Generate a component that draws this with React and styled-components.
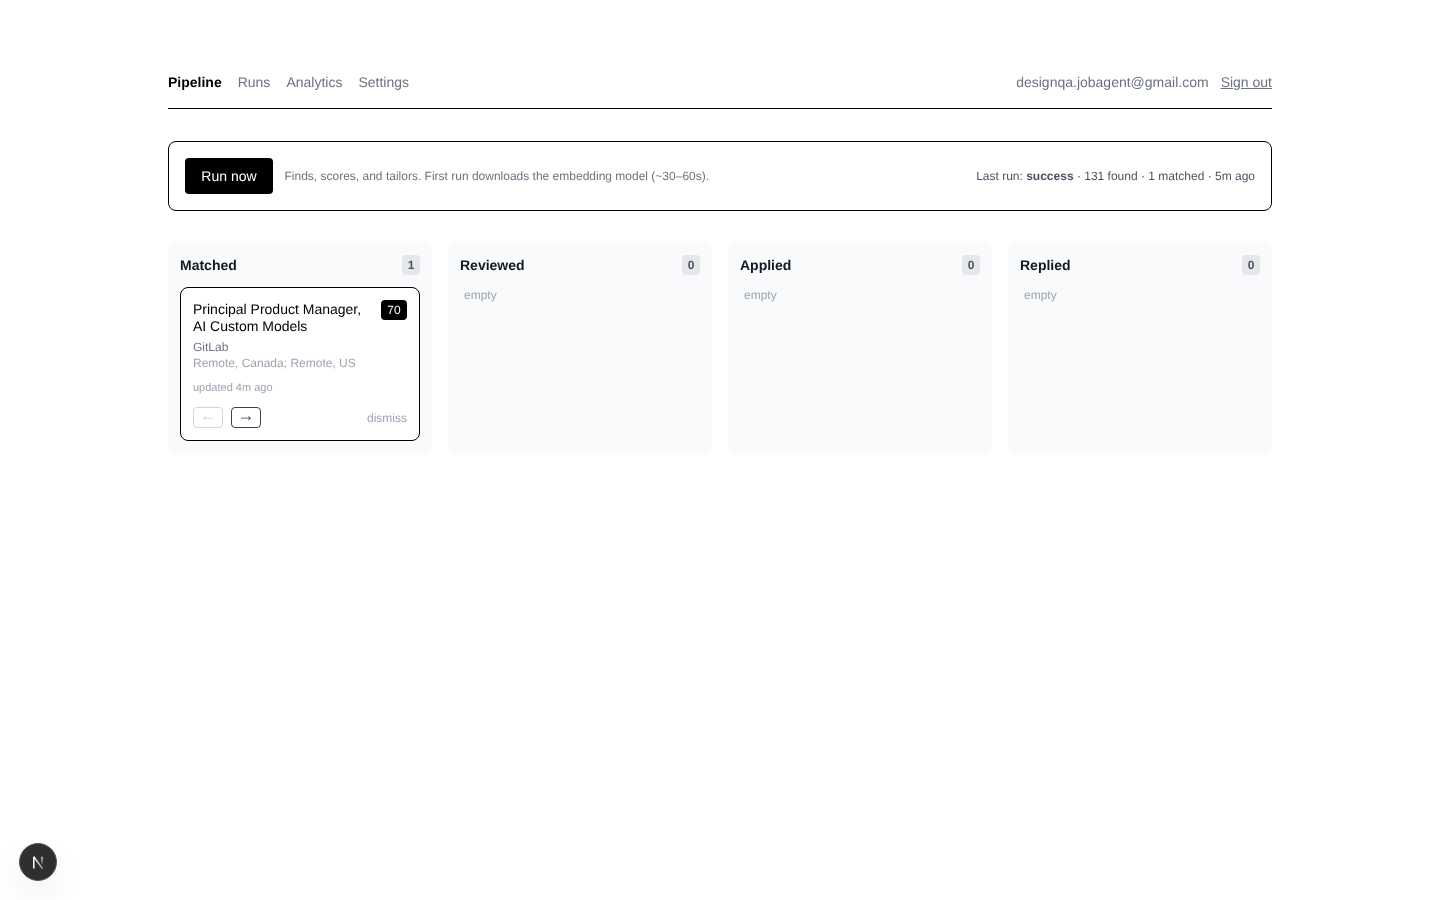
import React from 'react';
import styled, { createGlobalStyle } from 'styled-components';

const GlobalStyle = createGlobalStyle`
  html, body { margin: 0; padding: 0; background: #fff; }
  body {
    font-family: "Liberation Sans", Arial, sans-serif;
    color: #000;
    text-rendering: geometricPrecision;
    -webkit-font-smoothing: antialiased;
  }
  * { box-sizing: border-box; }
  button { text-rendering: inherit; }
`;

const Page = styled.main`
  width: 1104px;
  margin: 0 auto;
  padding-top: 72px;
  will-change: transform;
`;

const TopBar = styled.header`
  display: flex;
  justify-content: space-between;
  align-items: center;
  padding-bottom: 16px;
  border-bottom: 1px solid #000;
  font-size: 14px;
  line-height: 20px;
`;

const NavGroup = styled.nav`
  display: flex;
  gap: 16px;
`;

const NavLink = styled.a`
  color: ${p => (p.$active ? '#000' : '#6b7280')};
  font-weight: ${p => (p.$active ? 700 : 400)};
`;

const UserGroup = styled.div`
  display: flex;
  gap: 12px;
  color: #6b7280;
`;

const SignOut = styled.a`
  text-decoration: underline;
`;

const RunBanner = styled.section`
  display: flex;
  align-items: center;
  justify-content: space-between;
  margin-top: 32px;
  padding: 16px;
  border: 1px solid #000;
  border-radius: 8px;
`;

const RunLeft = styled.div`
  display: flex;
  align-items: center;
  gap: 11.5px;
`;

const RunButton = styled.button`
  width: 88px;
  height: 36px;
  padding: 0;
  border: 0;
  border-radius: 4px;
  background: #000;
  color: #fff;
  font: 14px/20px "Liberation Sans", Arial, sans-serif;
`;

const Hint = styled.span`
  font-size: 12px;
  line-height: 16px;
  color: #6b7280;
`;

const LastRun = styled.div`
  font-size: 12px;
  line-height: 16px;
  color: #4b5563;
  b { font-weight: 700; }
`;

const Board = styled.section`
  display: grid;
  grid-template-columns: repeat(4, 1fr);
  gap: 16px;
  margin-top: 32px;
`;

const Column = styled.div`
  padding: 12px;
  border-radius: 8px;
  background: #f9fafb;
  min-height: 210px;
`;

const ColumnHead = styled.div`
  display: flex;
  align-items: center;
  justify-content: space-between;
  height: 20px;
  margin-bottom: 12px;
`;

const ColumnTitle = styled.h2`
  margin: 0;
  font-size: 14px;
  line-height: 20px;
  font-weight: 700;
  color: #111827;
`;

const Count = styled.span`
  min-width: 18px;
  height: 20px;
  padding: 0 5px;
  border-radius: 4px;
  background: #e5e7eb;
  color: #4b5563;
  font-size: 12px;
  line-height: 20px;
  font-weight: 700;
  text-align: center;
`;

const Empty = styled.div`
  padding-left: 4px;
  font-size: 12px;
  line-height: 16px;
  color: #9ca3af;
`;

const Card = styled.article`
  padding: 12px;
  border: 1px solid #000;
  border-radius: 8px;
  background: #fff;
`;

const CardTop = styled.div`
  display: flex;
  justify-content: space-between;
  gap: 8px;
`;

const CardTitle = styled.h3`
  margin: 0;
  padding-top: 1px;
  font-size: 14px;
  line-height: 17px;
  font-weight: 400;
  color: #000;
`;

const Score = styled.span`
  flex: none;
  align-self: flex-start;
  width: 26px;
  height: 20px;
  border-radius: 4px;
  background: #000;
  color: #fff;
  font-size: 12px;
  line-height: 20px;
  text-align: center;
`;

const Company = styled.div`
  margin-top: 4px;
  font-size: 12px;
  line-height: 16px;
  color: #6b7280;
`;

const Location = styled.div`
  font-size: 12px;
  line-height: 16px;
  color: #9ca3af;
`;

const Updated = styled.div`
  margin-top: 9px;
  font-size: 11px;
  line-height: 16px;
  color: #9ca3af;
`;

const CardActions = styled.div`
  display: flex;
  align-items: center;
  gap: 8px;
  margin-top: 11px;
`;

const MoveButton = styled.button`
  width: 30px;
  height: 21px;
  padding: 0 0 3px;
  border: 1px solid #374151;
  border-radius: 4px;
  background: #fff;
  color: #374151;
  font: 17px/16px "Liberation Sans", sans-serif;
  &:disabled {
    border-color: #d1d5db;
    color: #d1d5db;
  }
`;

const Dismiss = styled.a`
  margin-left: auto;
  padding-top: 1px;
  font-size: 12px;
  line-height: 16px;
  color: #9ca3af;
`;

const DevBadge = styled.div`
  position: fixed;
  left: 19px;
  bottom: 19px;
  width: 38px;
  height: 38px;
  display: flex;
  align-items: center;
  justify-content: center;
  border-radius: 50%;
  background: #2f2f2f;
  border: 1px solid #555;
  box-shadow: 0 16px 32px rgba(0, 0, 0, 0.06);
`;

const columns = [
  { name: 'Reviewed' },
  { name: 'Applied' },
  { name: 'Replied' },
];

function NextMark() {
  return (
    <svg width="18" height="18" viewBox="0 0 18 18" fill="none">
      <defs>
        <linearGradient id="nextDiag" x1="4" y1="3" x2="14" y2="16" gradientUnits="userSpaceOnUse">
          <stop offset="0" stopColor="#fff" />
          <stop offset="1" stopColor="#fff" stopOpacity="0.45" />
        </linearGradient>
        <linearGradient id="nextStem" x1="13" y1="3.5" x2="13" y2="11" gradientUnits="userSpaceOnUse">
          <stop offset="0" stopColor="#fff" />
          <stop offset="1" stopColor="#fff" stopOpacity="0.2" />
        </linearGradient>
      </defs>
      <path d="M4.8 15.5V3.8" stroke="#fff" strokeWidth="1.5" />
      <path d="M4.8 3.8L13.6 15.8" stroke="url(#nextDiag)" strokeWidth="1.6" />
      <path d="M13 3.8V11" stroke="url(#nextStem)" strokeWidth="1.4" />
    </svg>
  );
}

export default function App() {
  return (
    <>
      <GlobalStyle />
      <Page>
        <TopBar>
          <NavGroup>
            <NavLink $active>Pipeline</NavLink>
            <NavLink>Runs</NavLink>
            <NavLink>Analytics</NavLink>
            <NavLink>Settings</NavLink>
          </NavGroup>
          <UserGroup>
            <span>designqa.jobagent@gmail.com</span>
            <SignOut>Sign out</SignOut>
          </UserGroup>
        </TopBar>

        <RunBanner>
          <RunLeft>
            <RunButton>Run now</RunButton>
            <Hint>Finds, scores, and tailors. First run downloads the embedding model (~30–60s).</Hint>
          </RunLeft>
          <LastRun>
            Last run: <b>success</b> · 131 found · 1 matched · 5m ago
          </LastRun>
        </RunBanner>

        <Board>
          <Column>
            <ColumnHead>
              <ColumnTitle>Matched</ColumnTitle>
              <Count>1</Count>
            </ColumnHead>
            <Card>
              <CardTop>
                <CardTitle>Principal Product Manager, AI Custom Models</CardTitle>
                <Score>70</Score>
              </CardTop>
              <Company>GitLab</Company>
              <Location>Remote, Canada; Remote, US</Location>
              <Updated>updated 4m ago</Updated>
              <CardActions>
                <MoveButton disabled>←</MoveButton>
                <MoveButton>→</MoveButton>
                <Dismiss>dismiss</Dismiss>
              </CardActions>
            </Card>
          </Column>
          {columns.map(col => (
            <Column key={col.name}>
              <ColumnHead>
                <ColumnTitle>{col.name}</ColumnTitle>
                <Count>0</Count>
              </ColumnHead>
              <Empty>empty</Empty>
            </Column>
          ))}
        </Board>
      </Page>
      <DevBadge>
        <NextMark />
      </DevBadge>
    </>
  );
}
